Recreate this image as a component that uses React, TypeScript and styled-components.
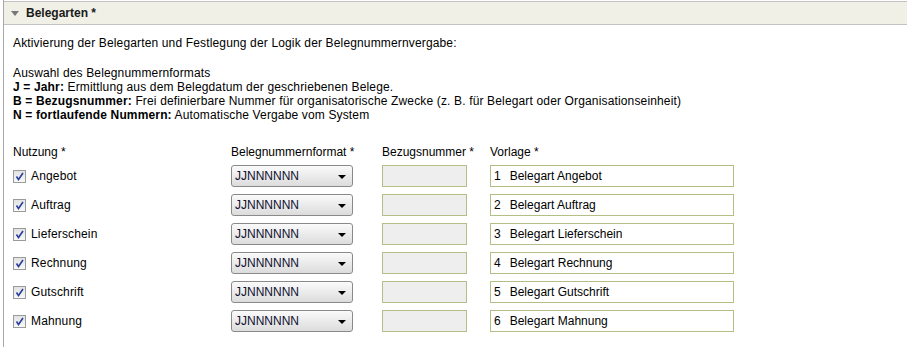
import React from "react";
import styled, { createGlobalStyle } from "styled-components";

const Global = createGlobalStyle`
  html, body { margin: 0; padding: 0; background: #fff; }
  body { font-family: "Liberation Sans", Arial, sans-serif; font-size: 12px; color: #000; letter-spacing: 0.15px; }
`;

const Panel = styled.div`
  margin-left: 3px;
  border-left: 1px solid #a8a8a8;
  min-height: 347px;
  box-sizing: border-box;
  padding-top: 1px;
`;

const Header = styled.div`
  height: 22px;
  border-top: 1px solid #c2c2c2;
  border-bottom: 1px solid #c2c2c2;
  background: #f0f0e6;
  display: flex;
  align-items: center;
  padding-left: 7px;
  gap: 7px;
  font-weight: bold;
  color: #1a1a1a;
  letter-spacing: 0;
`;

const Body = styled.div`
  padding: 11px 9px 0 9px;
`;

const Para = styled.p<{ $top?: number }>`
  margin: ${(p) => p.$top ?? 0}px 0 0 0;
  line-height: 14px;
  height: 14px;
  white-space: nowrap;
  & b { line-height: 14px; }
`;

const Grid = styled.div`
  margin-top: 23px;
  display: grid;
  grid-template-columns: 218px 151px 108px 244px;
  grid-template-rows: 13px repeat(6, 22px);
  row-gap: 7px;
  align-items: center;
`;

const ColHead = styled.div`
  line-height: 14px;
  align-self: start;
  letter-spacing: 0;
`;

const CheckCell = styled.label`
  display: flex;
  align-items: center;
  gap: 5px;
  height: 22px;
`;

const Box = styled.span`
  width: 11px;
  height: 11px;
  border: 1px solid #9a9b9b;
  background: linear-gradient(#e2e2e2, #f8f8f8);
  display: inline-flex;
  align-items: center;
  justify-content: center;
`;

const Select = styled.div`
  width: 122px;
  height: 22px;
  box-sizing: border-box;
  border: 1px solid #8a8a8a;
  border-radius: 3px;
  background: linear-gradient(#fafafa, #dcdcdc);
  display: flex;
  align-items: center;
  justify-content: space-between;
  padding: 0 6px 0 3px;
  color: #101030;
  letter-spacing: 0;
`;

const Arrow = styled.span`
  width: 0;
  height: 0;
  border-left: 4px solid transparent;
  border-right: 4px solid transparent;
  border-top: 4px solid #000;
  margin-top: 2px;
`;

const RefInput = styled.div`
  width: 85px;
  height: 22px;
  box-sizing: border-box;
  border: 1px solid #b3bf85;
  background: #eeeeee;
`;

const TplInput = styled.div`
  width: 244px;
  height: 22px;
  box-sizing: border-box;
  border: 1px solid #b3bf85;
  background: #fff;
  display: flex;
  align-items: center;
  padding-left: 3px;
  letter-spacing: 0;
`;

const Num = styled.span`
  margin-right: 9px;
`;

const rows = ["Angebot", "Auftrag", "Lieferschein", "Rechnung", "Gutschrift", "Mahnung"];

export default function App() {
  return (
    <>
      <Global />
      <Panel>
        <Header>
          <svg width="8" height="5" viewBox="0 0 8 5">
            <path d="M0 0 L8 0 L4 5 Z" fill="#777" />
          </svg>
          <span>Belegarten *</span>
        </Header>
        <Body>
          <Para>Aktivierung der Belegarten und Festlegung der Logik der Belegnummernvergabe:</Para>
          <Para $top={16}>Auswahl des Belegnummernformats</Para>
          <Para>
            <b>J = Jahr:</b> Ermittlung aus dem Belegdatum der geschriebenen Belege.
          </Para>
          <Para>
            <b>B = Bezugsnummer:</b> Frei definierbare Nummer für organisatorische Zwecke (z. B. für Belegart oder Organisationseinheit)
          </Para>
          <Para>
            <b>N = fortlaufende Nummern:</b> Automatische Vergabe vom System
          </Para>
          <Grid>
            <ColHead>Nutzung *</ColHead>
            <ColHead>Belegnummernformat *</ColHead>
            <ColHead>Bezugsnummer *</ColHead>
            <ColHead>Vorlage *</ColHead>
            {rows.map((r, i) => (
              <React.Fragment key={r}>
                <CheckCell>
                  <Box>
                    <svg width="9" height="9" viewBox="0 0 9 9">
                      <path d="M1.5 4.5 L3.5 7.5 L8 1" stroke="#2a3e9c" strokeWidth="1.6" fill="none" />
                    </svg>
                  </Box>
                  {r}
                </CheckCell>
                <Select>
                  <span>JJNNNNNN</span>
                  <Arrow />
                </Select>
                <RefInput />
                <TplInput>
                  <Num>{i + 1}</Num>Belegart {r}
                </TplInput>
              </React.Fragment>
            ))}
          </Grid>
        </Body>
      </Panel>
    </>
  );
}
